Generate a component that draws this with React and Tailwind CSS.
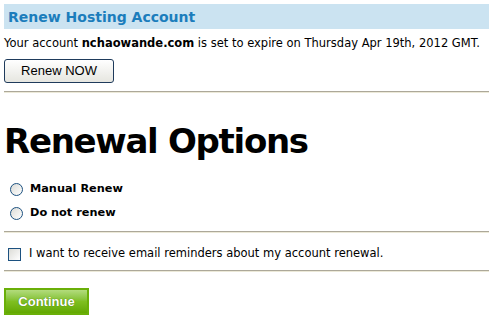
export default function App() {
  return (
    <div className="pl-[4px] pt-[4px] bg-white text-black" style={{ fontFamily: '"DejaVu Sans", Verdana, sans-serif' }}>
      <div className="h-[25px] bg-[#cbe3f1] flex items-center pl-[4px]">
        <span className="text-[14px] font-bold text-[#1b7dbc] leading-none">Renew Hosting Account</span>
      </div>
      <p className="text-[11.5px] leading-[14px] mt-[7px] whitespace-nowrap">
        Your account <b>nchaowande.com</b> is set to expire on Thursday Apr 19th, 2012 GMT.
      </p>
      <button
        className="mt-[9px] w-[110px] h-[24px] border border-[#1f3b5c] rounded-[3px] bg-gradient-to-b from-white to-[#e6e6e0] text-[13px] text-black"
        style={{ fontFamily: '"Liberation Sans", Arial, sans-serif' }}
      >
        Renew NOW
      </button>
      <div className="mt-[8px] border-t border-t-[#aca899] border-b border-b-[#ece9d8]" />
      <h1 className="text-[34px] font-bold leading-none mt-[31px] tracking-[-1.3px]">Renewal Options</h1>
      <div className="mt-[24px] flex flex-col gap-[10px] text-[11.3px] font-bold">
        <label className="flex items-center gap-[7px] pl-[6px] h-[14px]">
          <span className="w-[13px] h-[13px] rounded-full border border-[#1c5180] bg-gradient-to-br from-[#dcdcd7] to-white" />
          Manual Renew
        </label>
        <label className="flex items-center gap-[7px] pl-[6px] h-[14px]">
          <span className="w-[13px] h-[13px] rounded-full border border-[#1c5180] bg-gradient-to-br from-[#dcdcd7] to-white" />
          Do not renew
        </label>
      </div>
      <div className="mt-[11px] border-t border-t-[#aca899] border-b border-b-[#ece9d8]" />
      <label className="mt-[14px] flex items-center gap-[8px] pl-[4px] text-[11.5px] h-[14px]">
        <span className="w-[13px] h-[13px] border border-[#1c5180] bg-gradient-to-br from-[#dcdcd7] to-white" />
        I want to receive email reminders about my account renewal.
      </label>
      <div className="mt-[9px] border-t border-t-[#aca899] border-b border-b-[#ece9d8]" />
      <button
        className="mt-[16px] w-[85px] h-[27px] border-2 border-[#6aaf08] bg-gradient-to-b from-[#b3dc7c] via-[#7fbf20] to-[#62a800] text-white font-bold text-[13px] [text-shadow:0_0_1px_#3a6a00]"
        style={{ fontFamily: '"Liberation Sans", Arial, sans-serif' }}
      >
        Continue
      </button>
    </div>
  );
}
